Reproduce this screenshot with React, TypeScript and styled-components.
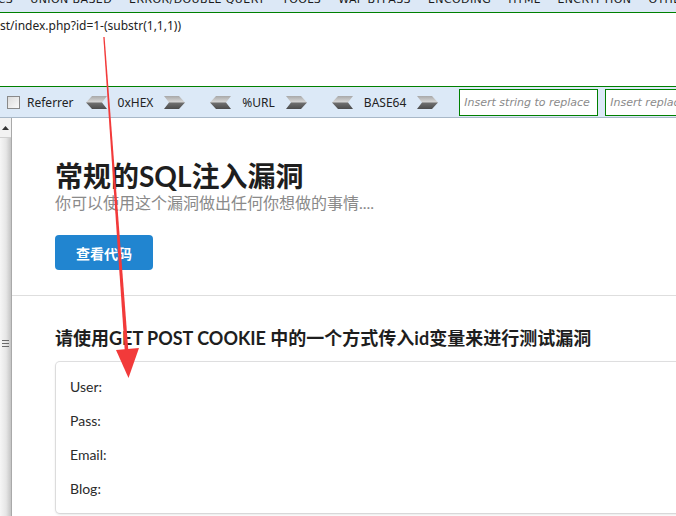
import React from "react";
import styled, { createGlobalStyle } from "styled-components";

const Global = createGlobalStyle`
  html, body { margin: 0; padding: 0; background: #fff; overflow: hidden; }
  #root { width: 676px; height: 516px; }
`;

const Page = styled.div`
  position: relative;
  width: 676px;
  height: 516px;
  overflow: hidden;
  display: flex;
  flex-direction: column;
  background: #fff;
`;

const MenuBar = styled.div`
  height: 12px;
  flex: none;
  background: #dce8f6;
  border-bottom: 1px solid #008000;
  overflow: hidden;
  display: flex;
  font-family: "DejaVu Sans", sans-serif;
  font-size: 11px;
  line-height: 14px;
  color: #1a1a1a;
  white-space: nowrap;
`;

const MenuTrack = styled.div`
  display: flex;
  gap: 17px;
  margin-top: -7px;
  margin-left: -56px;
`;

const MenuItem = styled.span`
  letter-spacing: 0.4px;
`;

const UrlArea = styled.div`
  height: 73px;
  flex: none;
  padding: 5px 0 0 0;
  box-sizing: border-box;
  font-family: "Noto Sans", sans-serif;
  font-size: 12px;
  line-height: 16px;
  color: #222;
  white-space: nowrap;
`;

const Toolbar = styled.div`
  height: 30px;
  flex: none;
  background: #dce9f7;
  border-top: 1px solid #008000;
  border-bottom: 1px solid #a8b8c8;
  display: flex;
  align-items: center;
  font-family: "Noto Sans", sans-serif;
  font-size: 12px;
  color: #222;
  white-space: nowrap;
`;

const Check = styled.span`
  width: 11px;
  height: 11px;
  margin-left: 7px;
  border: 1px solid #8a8a8a;
  background: linear-gradient(135deg, #dcdcdc, #fafafa);
  flex: none;
`;

const CheckLabel = styled.span`
  margin-left: 7px;
  margin-right: 12px;
`;

const Group = styled.div<{ $mr: number }>`
  display: flex;
  align-items: center;
  gap: 11px;
  margin-right: ${(p) => p.$mr}px;
`;

const ReplaceInput = styled.div<{ $w: number }>`
  width: ${(p) => p.$w}px;
  height: 27px;
  flex: none;
  box-sizing: border-box;
  border: 1px solid #008000;
  background: #fff;
  margin-right: 7px;
  padding-left: 4px;
  display: flex;
  align-items: center;
  font-family: "DejaVu Sans", sans-serif;
  font-style: italic;
  font-size: 11px;
  color: #8a8a8a;
  overflow: hidden;
`;

const Body = styled.div`
  flex: 1;
  display: flex;
  min-height: 0;
`;

const ScrollBar = styled.div`
  width: 11px;
  flex: none;
  border-right: 1px solid #a9a9a9;
  display: flex;
  flex-direction: column;
  background: #e8e8e8;
`;

const ScrollButton = styled.div`
  height: 19px;
  background: #f2f2f2;
  display: flex;
  align-items: center;
  justify-content: center;
  border-bottom: 1px solid #d0d0d0;
`;

const ScrollThumb = styled.div`
  flex: 1;
  background: linear-gradient(90deg, #f6f6f6 0%, #e6e6e6 55%, #c4c4c4 100%);
  display: flex;
  align-items: center;
  justify-content: center;
  padding-top: 32px;
`;

const Grip = styled.div`
  width: 7px;
  height: 7px;
  background: repeating-linear-gradient(180deg, #6a6a6a 0 1px, transparent 1px 3px);
`;

const Main = styled.div`
  flex: 1;
  min-width: 0;
  font-family: Lato, "Noto Sans CJK SC", sans-serif;
  color: rgba(0, 0, 0, 0.87);
`;

const Hero = styled.div`
  padding: 40px 0 25px 43px;
  border-bottom: 1px solid #dedede;
`;

const Title = styled.h1`
  margin: 0;
  font-size: 28px;
  line-height: 36px;
  font-weight: 700;
  color: #1e1e1e;
`;

const Subtitle = styled.div`
  font-size: 16px;
  line-height: 18px;
  color: #8a8a8a;
`;

const PrimaryButton = styled.button`
  margin-top: 23px;
  width: 98px;
  height: 35px;
  border: none;
  border-radius: 4px;
  background: #2185d0;
  color: #fff;
  font-family: Lato, "Noto Sans CJK SC", sans-serif;
  font-size: 14px;
  font-weight: 700;
  padding: 0;
  display: block;
`;

const Section = styled.div`
  padding: 30px 0 0 44px;
`;

const SectionTitle = styled.h3`
  margin: 0 0 12px -1px;
  font-size: 18px;
  line-height: 24px;
  font-weight: 700;
  color: #1e1e1e;
  white-space: nowrap;
`;

const Card = styled.div`
  width: 700px;
  box-sizing: border-box;
  padding: 15px 14px 14px;
  border-radius: 4px;
  background: #fff;
  box-shadow: 0 1px 3px 0 #d4d4d5, 0 0 0 1px #e0e0e1;
  display: flex;
  flex-direction: column;
  gap: 14px;
`;

const Field = styled.div`
  font-size: 14px;
  line-height: 20px;
  color: #2b2b2b;
`;

const Overlay = styled.svg`
  position: absolute;
  left: 0;
  top: 0;
  pointer-events: none;
`;

const Chevron = ({ dir }: { dir: "left" | "right" }) => (
  <svg width="21" height="13" viewBox="0 0 21 13">
    <defs>
      <linearGradient id={`g-${dir}`} x1="0" y1="0" x2="0" y2="1">
        <stop offset="0" stopColor="#a8a8a8" />
        <stop offset="0.45" stopColor="#d6d6d6" />
        <stop offset="0.55" stopColor="#6e6e6e" />
        <stop offset="1" stopColor="#4c4c4c" />
      </linearGradient>
    </defs>
    <polygon
      points={
        dir === "left"
          ? "0,6.5 6,0 21,0 16,6.5 21,13 6,13"
          : "0,0 15,0 21,6.5 15,13 0,13 5,6.5"
      }
      fill={`url(#g-${dir})`}
    />
  </svg>
);

const menu = [
  "SQL BASICS",
  "UNION BASED",
  "ERROR/DOUBLE QUERY",
  "TOOLS",
  "WAF BYPASS",
  "ENCODING",
  "HTML",
  "ENCRYPTION",
  "OTHER",
];

const encoders = [
  { label: "0xHEX", mr: 25 },
  { label: "%URL", mr: 25 },
  { label: "BASE64", mr: 21 },
];

const fields = ["User:", "Pass:", "Email:", "Blog:"];

export default function App() {
  return (
    <Page>
      <Global />
      <MenuBar>
        <MenuTrack>
          {menu.map((m) => (
            <MenuItem key={m}>{m}</MenuItem>
          ))}
        </MenuTrack>
      </MenuBar>
      <UrlArea>st/index.php?id=1-(substr(1,1,1))</UrlArea>
      <Toolbar>
        <Check />
        <CheckLabel>Referrer</CheckLabel>
        {encoders.map((e) => (
          <Group key={e.label} $mr={e.mr}>
            <Chevron dir="left" />
            <span>{e.label}</span>
            <Chevron dir="right" />
          </Group>
        ))}
        <ReplaceInput $w={139}>Insert string to replace</ReplaceInput>
        <ReplaceInput $w={139}>Insert replacing string</ReplaceInput>
      </Toolbar>
      <Body>
        <ScrollBar>
          <ScrollButton>
            <svg width="7" height="4" viewBox="0 0 7 4">
              <polygon points="0,4 3.5,0 7,4" fill="#333" />
            </svg>
          </ScrollButton>
          <ScrollThumb>
            <Grip />
          </ScrollThumb>
        </ScrollBar>
        <Main>
          <Hero>
            <Title>常规的SQL注入漏洞</Title>
            <Subtitle>你可以使用这个漏洞做出任何你想做的事情....</Subtitle>
            <PrimaryButton>查看代码</PrimaryButton>
          </Hero>
          <Section>
            <SectionTitle>请使用GET POST COOKIE 中的一个方式传入id变量来进行测试漏洞</SectionTitle>
            <Card>
              {fields.map((f) => (
                <Field key={f}>{f}</Field>
              ))}
            </Card>
          </Section>
        </Main>
      </Body>
      <Overlay width="676" height="516" viewBox="0 0 676 516">
        <polygon points="103.3,37 104.6,37 128.6,354 125,354" fill="#f23a3a" />
        <polygon points="116,350 139,348 128.5,378" fill="#f23a3a" />
      </Overlay>
    </Page>
  );
}
